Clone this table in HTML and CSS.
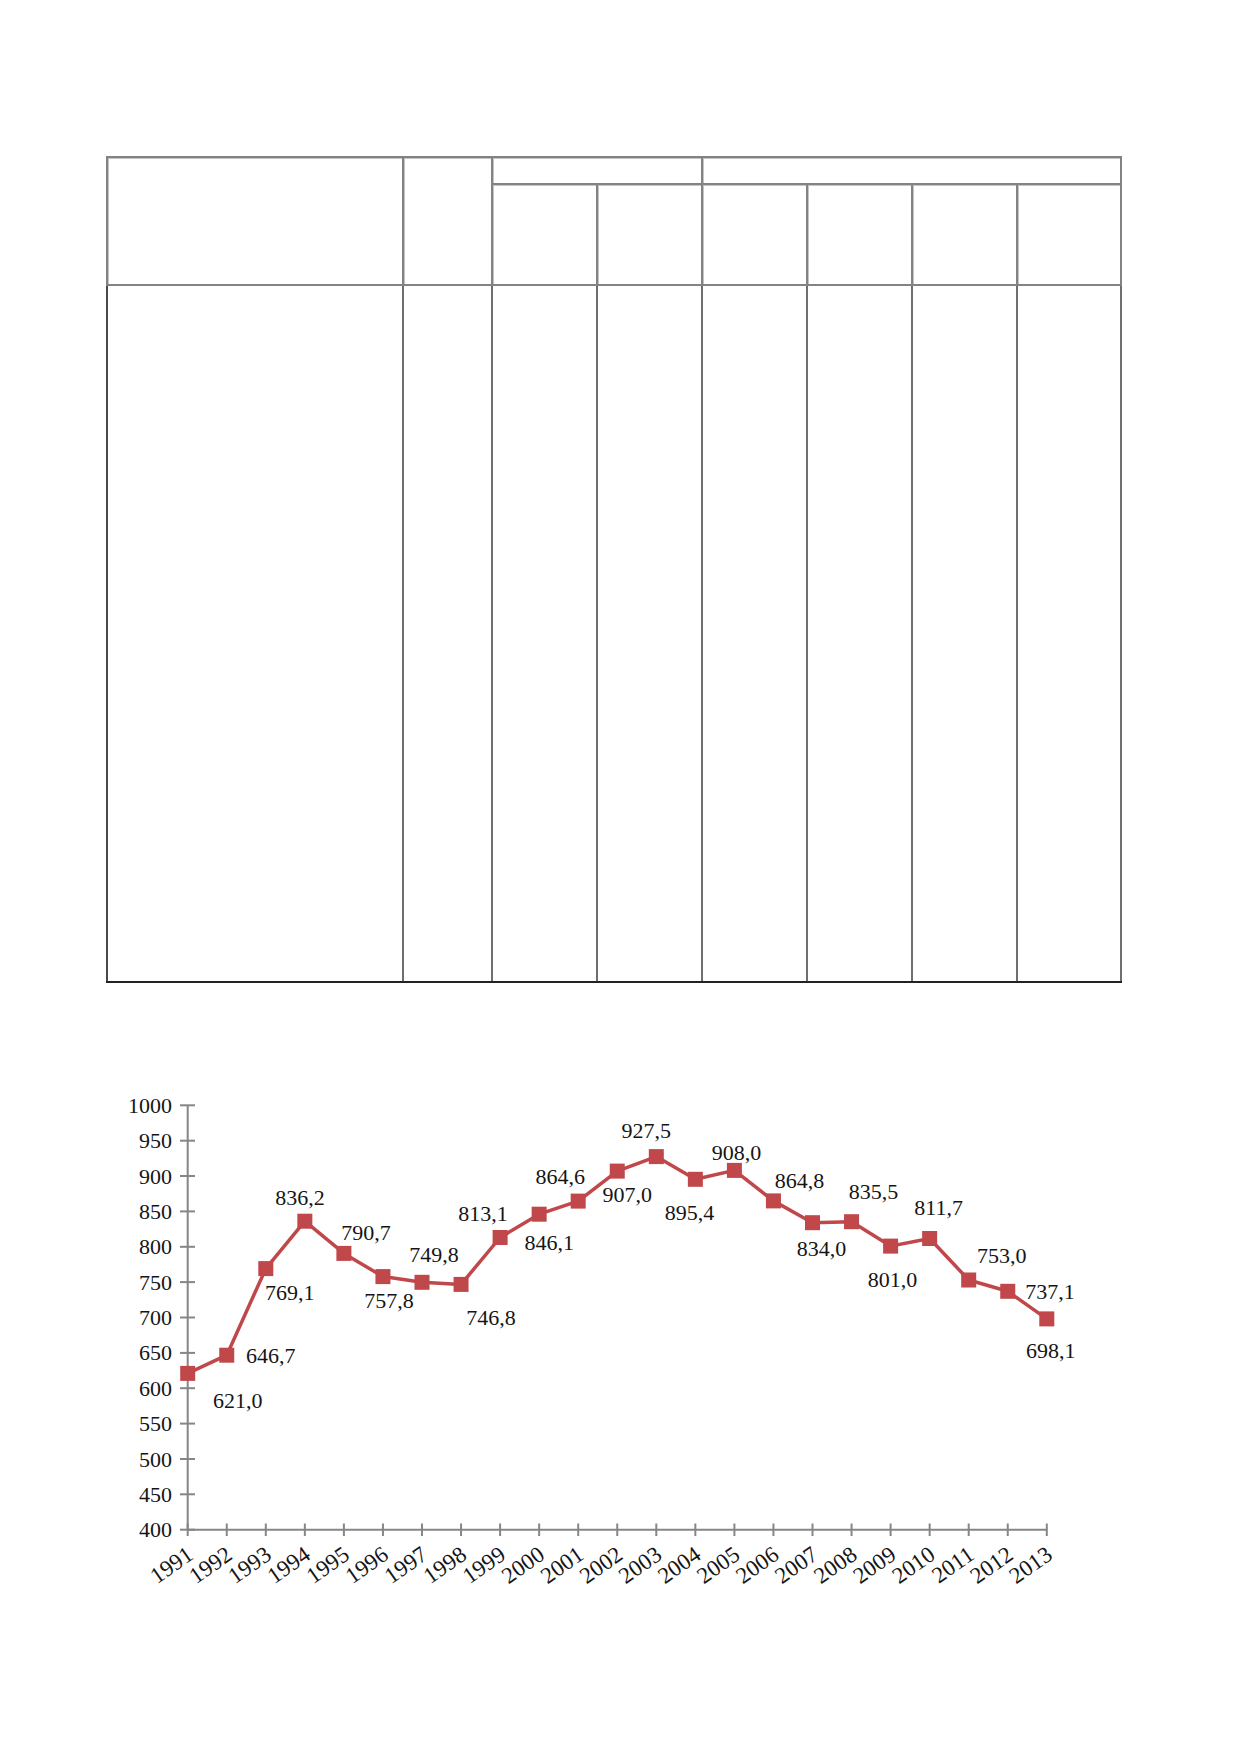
FILE: index.html
```html
<!DOCTYPE html>
<html lang="ru">
<head>
<meta charset="utf-8">
<title>Таблица и график</title>
<link rel="stylesheet" href="styles.css">
</head>
<body>
<div class="page">
  <div class="table">
    <div class="thead">
      <div class="cell c-name"></div>
      <div class="cell c-unit"></div>
      <div class="cell c-grp1"></div>
      <div class="cell c-grp2"></div>
      <div class="cell"></div>
      <div class="cell"></div>
      <div class="cell"></div>
      <div class="cell"></div>
      <div class="cell"></div>
      <div class="cell"></div>
    </div>
    <div class="tbody">
      <div class="bcell"></div>
      <div class="bcell"></div>
      <div class="bcell"></div>
      <div class="bcell"></div>
      <div class="bcell"></div>
      <div class="bcell"></div>
      <div class="bcell"></div>
      <div class="bcell"></div>
    </div>
  </div>

  <svg class="chart" width="1239" height="620" viewBox="0 1000 1239 620" xmlns="http://www.w3.org/2000/svg">
    <g class="axis">
      <line x1="187.7" y1="1107.3" x2="187.7" y2="1531.7"/>
      <line x1="187.7" y1="1531.7" x2="1046.8" y2="1531.7"/>
      <line x1="180" y1="1107.3" x2="195" y2="1107.3"/>
      <line x1="180" y1="1142.7" x2="195" y2="1142.7"/>
      <line x1="180" y1="1178.0" x2="195" y2="1178.0"/>
      <line x1="180" y1="1213.4" x2="195" y2="1213.4"/>
      <line x1="180" y1="1248.8" x2="195" y2="1248.8"/>
      <line x1="180" y1="1284.1" x2="195" y2="1284.1"/>
      <line x1="180" y1="1319.5" x2="195" y2="1319.5"/>
      <line x1="180" y1="1354.9" x2="195" y2="1354.9"/>
      <line x1="180" y1="1390.2" x2="195" y2="1390.2"/>
      <line x1="180" y1="1425.6" x2="195" y2="1425.6"/>
      <line x1="180" y1="1461.0" x2="195" y2="1461.0"/>
      <line x1="180" y1="1496.3" x2="195" y2="1496.3"/>
      <line x1="180" y1="1531.7" x2="195" y2="1531.7"/>
      <line x1="187.7" y1="1525.5" x2="187.7" y2="1538"/>
      <line x1="226.75" y1="1525.5" x2="226.75" y2="1538"/>
      <line x1="265.8" y1="1525.5" x2="265.8" y2="1538"/>
      <line x1="304.85" y1="1525.5" x2="304.85" y2="1538"/>
      <line x1="343.9" y1="1525.5" x2="343.9" y2="1538"/>
      <line x1="382.95" y1="1525.5" x2="382.95" y2="1538"/>
      <line x1="422" y1="1525.5" x2="422" y2="1538"/>
      <line x1="461.05" y1="1525.5" x2="461.05" y2="1538"/>
      <line x1="500.1" y1="1525.5" x2="500.1" y2="1538"/>
      <line x1="539.15" y1="1525.5" x2="539.15" y2="1538"/>
      <line x1="578.2" y1="1525.5" x2="578.2" y2="1538"/>
      <line x1="617.25" y1="1525.5" x2="617.25" y2="1538"/>
      <line x1="656.3" y1="1525.5" x2="656.3" y2="1538"/>
      <line x1="695.35" y1="1525.5" x2="695.35" y2="1538"/>
      <line x1="734.4" y1="1525.5" x2="734.4" y2="1538"/>
      <line x1="773.45" y1="1525.5" x2="773.45" y2="1538"/>
      <line x1="812.5" y1="1525.5" x2="812.5" y2="1538"/>
      <line x1="851.55" y1="1525.5" x2="851.55" y2="1538"/>
      <line x1="890.6" y1="1525.5" x2="890.6" y2="1538"/>
      <line x1="929.65" y1="1525.5" x2="929.65" y2="1538"/>
      <line x1="968.7" y1="1525.5" x2="968.7" y2="1538"/>
      <line x1="1007.75" y1="1525.5" x2="1007.75" y2="1538"/>
      <line x1="1046.8" y1="1525.5" x2="1046.8" y2="1538"/>
    </g>

    <g class="ylabels">
      <text x="172" y="1114.8">1000</text>
      <text x="172" y="1150.2">950</text>
      <text x="172" y="1185.5">900</text>
      <text x="172" y="1220.9">850</text>
      <text x="172" y="1256.3">800</text>
      <text x="172" y="1291.6">750</text>
      <text x="172" y="1327.0">700</text>
      <text x="172" y="1362.4">650</text>
      <text x="172" y="1397.7">600</text>
      <text x="172" y="1433.1">550</text>
      <text x="172" y="1468.5">500</text>
      <text x="172" y="1503.8">450</text>
      <text x="172" y="1539.2">400</text>
    </g>

    <g class="xlabels">
      <text x="194.7" y="1560" transform="rotate(-35 194.7 1560)">1991</text>
      <text x="233.75" y="1560" transform="rotate(-35 233.75 1560)">1992</text>
      <text x="272.8" y="1560" transform="rotate(-35 272.8 1560)">1993</text>
      <text x="311.85" y="1560" transform="rotate(-35 311.85 1560)">1994</text>
      <text x="350.9" y="1560" transform="rotate(-35 350.9 1560)">1995</text>
      <text x="389.95" y="1560" transform="rotate(-35 389.95 1560)">1996</text>
      <text x="429" y="1560" transform="rotate(-35 429 1560)">1997</text>
      <text x="468.05" y="1560" transform="rotate(-35 468.05 1560)">1998</text>
      <text x="507.1" y="1560" transform="rotate(-35 507.1 1560)">1999</text>
      <text x="546.15" y="1560" transform="rotate(-35 546.15 1560)">2000</text>
      <text x="585.2" y="1560" transform="rotate(-35 585.2 1560)">2001</text>
      <text x="624.25" y="1560" transform="rotate(-35 624.25 1560)">2002</text>
      <text x="663.3" y="1560" transform="rotate(-35 663.3 1560)">2003</text>
      <text x="702.35" y="1560" transform="rotate(-35 702.35 1560)">2004</text>
      <text x="741.4" y="1560" transform="rotate(-35 741.4 1560)">2005</text>
      <text x="780.45" y="1560" transform="rotate(-35 780.45 1560)">2006</text>
      <text x="819.5" y="1560" transform="rotate(-35 819.5 1560)">2007</text>
      <text x="858.55" y="1560" transform="rotate(-35 858.55 1560)">2008</text>
      <text x="897.6" y="1560" transform="rotate(-35 897.6 1560)">2009</text>
      <text x="936.65" y="1560" transform="rotate(-35 936.65 1560)">2010</text>
      <text x="975.7" y="1560" transform="rotate(-35 975.7 1560)">2011</text>
      <text x="1014.75" y="1560" transform="rotate(-35 1014.75 1560)">2012</text>
      <text x="1053.8" y="1560" transform="rotate(-35 1053.8 1560)">2013</text>
    </g>

    <polyline class="series" points="187.7,1375.4 226.75,1357.2 265.8,1270.6 304.85,1223.2 343.9,1255.4 382.95,1278.6 422,1284.3 461.05,1286.4 500.1,1239.5 539.15,1216.2 578.2,1203.1 617.25,1173.1 656.3,1158.6 695.35,1181.3 734.4,1172.4 773.45,1202.9 812.5,1224.7 851.55,1223.7 890.6,1248.1 929.65,1240.5 968.7,1282 1007.75,1293.3 1046.8,1320.9"/>

    <g class="markers">
      <rect x="180.2" y="1367.9" width="15" height="15"/>
      <rect x="219.25" y="1349.7" width="15" height="15"/>
      <rect x="258.3" y="1263.1" width="15" height="15"/>
      <rect x="297.35" y="1215.7" width="15" height="15"/>
      <rect x="336.4" y="1247.9" width="15" height="15"/>
      <rect x="375.45" y="1271.1" width="15" height="15"/>
      <rect x="414.5" y="1276.8" width="15" height="15"/>
      <rect x="453.55" y="1278.9" width="15" height="15"/>
      <rect x="492.6" y="1232" width="15" height="15"/>
      <rect x="531.65" y="1208.7" width="15" height="15"/>
      <rect x="570.7" y="1195.6" width="15" height="15"/>
      <rect x="609.75" y="1165.6" width="15" height="15"/>
      <rect x="648.8" y="1151.1" width="15" height="15"/>
      <rect x="687.85" y="1173.8" width="15" height="15"/>
      <rect x="726.9" y="1164.9" width="15" height="15"/>
      <rect x="765.95" y="1195.4" width="15" height="15"/>
      <rect x="805" y="1217.2" width="15" height="15"/>
      <rect x="844.05" y="1216.2" width="15" height="15"/>
      <rect x="883.1" y="1240.6" width="15" height="15"/>
      <rect x="922.15" y="1233" width="15" height="15"/>
      <rect x="961.2" y="1274.5" width="15" height="15"/>
      <rect x="1000.25" y="1285.8" width="15" height="15"/>
      <rect x="1039.3" y="1313.4" width="15" height="15"/>
    </g>

    <g class="vlabels">
      <text x="237.7" y="1409.9">621,0</text>
      <text x="270.8" y="1364.7">646,7</text>
      <text x="289.8" y="1302.1">769,1</text>
      <text x="299.9" y="1206.7">836,2</text>
      <text x="365.9" y="1241.9">790,7</text>
      <text x="389" y="1310.1">757,8</text>
      <text x="434" y="1263.8">749,8</text>
      <text x="491" y="1326.9">746,8</text>
      <text x="483.1" y="1223">813,1</text>
      <text x="549.2" y="1251.7">846,1</text>
      <text x="560.2" y="1185.6">864,6</text>
      <text x="627.3" y="1203.6">907,0</text>
      <text x="646.3" y="1140.1">927,5</text>
      <text x="689.4" y="1221.8">895,4</text>
      <text x="736.4" y="1161.9">908,0</text>
      <text x="799.5" y="1190.4">864,8</text>
      <text x="821.5" y="1258.2">834,0</text>
      <text x="873.6" y="1201.2">835,5</text>
      <text x="892.6" y="1288.6">801,0</text>
      <text x="938.7" y="1217">811,7</text>
      <text x="1001.7" y="1264.5">753,0</text>
      <text x="1050" y="1300.8">737,1</text>
      <text x="1050.8" y="1360.4">698,1</text>
    </g>
  </svg>
</div>
</body>
</html>
```
FILE: styles.css
```css
html, body {
  margin: 0;
  padding: 0;
  background: #ffffff;
}

body {
  font-family: "Liberation Serif", "Times New Roman", serif;
  color: #1a1a1a;
}

.page {
  width: 1239px;
  padding-top: 156px;
  box-sizing: border-box;
}

.table {
  margin-left: 106px;
  width: 1016px;
}

.thead {
  display: grid;
  grid-template-columns: 294px 87px 103px 103px 103px 103px 103px 102px;
  grid-template-rows: 25px 99px;
  gap: 2px;
  padding: 2px;
  background: #838383;
}

.cell {
  background: #ffffff;
  box-shadow: inset 1px 1px 0 #c4c4c4;
}

.c-name {
  grid-column: 1;
  grid-row: 1 / 3;
}

.c-unit {
  grid-column: 2;
  grid-row: 1 / 3;
}

.c-grp1 {
  grid-column: 3 / 5;
  grid-row: 1;
}

.c-grp2 {
  grid-column: 5 / 9;
  grid-row: 1;
}

.tbody {
  display: grid;
  grid-template-columns: 294px 87px 103px 103px 103px 103px 103px 102px;
  grid-template-rows: 695px;
  column-gap: 2px;
  padding: 0 2px 0 2px;
  background: #6f6f6f;
  border-bottom: 2px solid #222222;
}

.bcell {
  background: #ffffff;
}

.tbody .bcell:first-child {
  box-shadow: -2px 0 0 #4a4a4a;
}

.chart {
  display: block;
  margin-top: 15px;
}

.axis line {
  stroke: #868686;
  stroke-width: 2;
}

.ylabels text,
.xlabels text,
.vlabels text {
  font-family: "Liberation Serif", "Times New Roman", serif;
  font-size: 22px;
  fill: #151515;
}

.xlabels text {
  font-size: 23px;
}

.ylabels text,
.xlabels text {
  text-anchor: end;
}

.vlabels text {
  text-anchor: middle;
}

.series {
  fill: none;
  stroke: #c0474a;
  stroke-width: 3.5;
  stroke-linejoin: round;
}

.markers rect {
  fill: #c0474a;
}
```
